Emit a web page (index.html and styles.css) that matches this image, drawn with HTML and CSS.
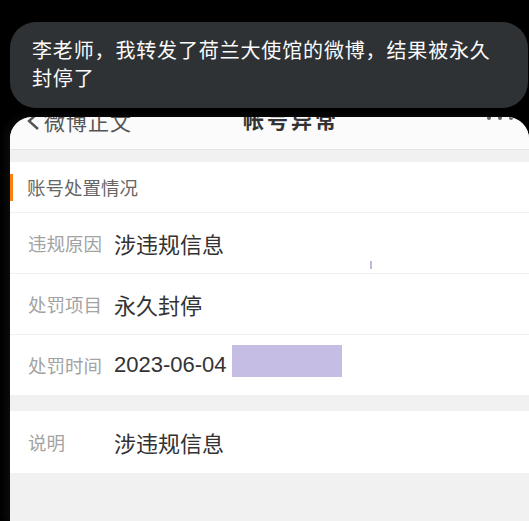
FILE: index.html
```html
<!DOCTYPE html>
<html lang="zh">
<head>
<meta charset="utf-8">
<link rel="stylesheet" href="styles.css">
</head>
<body>
<div class="screen">
  <div class="bubble">李老师，我转发了荷兰大使馆的微博，结果被永久<br>封停了</div>
  <div class="card">
    <div class="navbar">
      <div class="back">
        <svg class="chev" width="14" height="20" viewBox="0 0 14 20"><path d="M12 2 L3 10 L12 18" fill="none" stroke="#555" stroke-width="2.4"/></svg>
        <span>微博正文</span>
      </div>
      <div class="title">帐号异常</div>
      <div class="more"><i></i><i></i><i></i></div>
    </div>
    <div class="section">
      <div class="sec-title"><span class="bar"></span><span>账号处置情况</span></div>
      <div class="row"><span class="label">违规原因</span><span class="value">涉违规信息</span><span class="tick"></span></div>
      <div class="row"><span class="label">处罚项目</span><span class="value">永久封停</span></div>
      <div class="row last"><span class="label">处罚时间</span><span class="value num">2023-06-04</span><span class="redact"></span></div>
    </div>
    <div class="section second">
      <div class="row note"><span class="label">说明</span><span class="value">涉违规信息</span></div>
    </div>
  </div>
</div>
</body>
</html>
```
FILE: styles.css
```css
html, body {
  margin: 0;
  padding: 0;
  background: #000;
  width: 529px;
  height: 521px;
  overflow: hidden;
  font-family: "Noto Sans CJK SC", "Noto Sans", sans-serif;
}
.screen {
  display: flex;
  flex-direction: column;
  height: 521px;
  padding-left: 10px;
  box-sizing: border-box;
}
.bubble {
  margin-top: 22px;
  margin-right: 1px;
  height: 86px;
  box-sizing: border-box;
  padding: 14px 20px 16px 22px;
  background: #2f3235;
  border-radius: 26px;
  color: #fbfbfb;
  font-size: 20px;
  line-height: 28px;
  letter-spacing: 0.85px;
}
.card {
  margin-top: 9px;
  flex: 1;
  background: #f1f1f1;
  border-radius: 22px 22px 0 0;
  overflow: hidden;
  box-shadow: -4px 0 8px rgba(40,40,40,0.35);
}
.navbar {
  height: 32px;
  background: #fbfbfb;
  border-bottom: 1px solid #e4e4e4;
  display: flex;
  align-items: flex-start;
  position: relative;
}
.back {
  display: flex;
  align-items: center;
  margin-top: -8px;
  margin-left: 16px;
  color: #555;
  font-size: 21px;
  line-height: 24px;
  gap: 4px;
  letter-spacing: 1px;
}
.title {
  position: absolute;
  left: 233px;
  top: -10px;
  font-size: 21px;
  line-height: 24px;
  font-weight: bold;
  color: #333;
  letter-spacing: 3px;
}
.more {
  position: absolute;
  right: 16px;
  top: -1px;
  display: flex;
  gap: 7px;
}
.more i {
  width: 4px;
  height: 4px;
  border-radius: 50%;
  background: #666;
}
.section {
  margin-top: 12px;
  background: #fff;
}
.section.second {
  margin-top: 16px;
}
.sec-title {
  height: 50px;
  display: flex;
  align-items: center;
  border-bottom: 1px solid #f0f0f0;
  color: #666;
  font-size: 18.5px;
}
.bar {
  width: 3px;
  height: 27px;
  background: #f7820e;
  margin-right: 14px;
}
.row {
  height: 60px;
  display: flex;
  align-items: center;
  border-bottom: 1px solid #f0f0f0;
  position: relative;
}
.row.last {
  border-bottom: none;
}
.row.note {
  height: 62px;
  border-bottom: none;
}
.label {
  width: 86px;
  padding-left: 18px;
  color: #a3a3a3;
  font-size: 18.5px;
  flex: none;
  white-space: nowrap;
}
.value {
  color: #333;
  font-size: 22px;
}
.value.num {
  font-family: "Liberation Sans", "Noto Sans", sans-serif;
  font-size: 22px;
}
.redact {
  width: 110px;
  height: 32px;
  margin-left: 5px;
  margin-bottom: 8px;
  background: #c5bde3;
}
.tick {
  position: absolute;
  left: 360px;
  top: 48px;
  width: 2px;
  height: 8px;
  background: #bdb5e0;
}
```
